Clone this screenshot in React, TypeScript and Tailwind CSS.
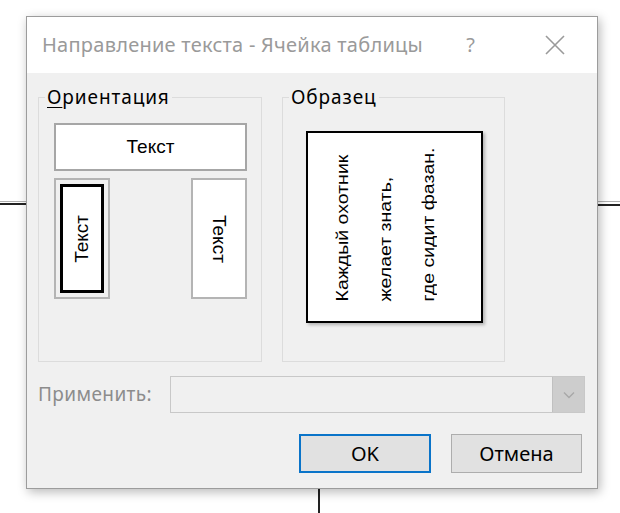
import React from "react";

const ui = { fontFamily: '"Noto Sans", "Open Sans", sans-serif' };
const arial = { fontFamily: '"Liberation Sans", Arial, sans-serif' };

function CloseIcon() {
  return (
    <svg width="20" height="20" viewBox="0 0 20 20" className="block">
      <path d="M1 1 L19 19 M19 1 L1 19" stroke="#9a9a9a" strokeWidth="1.6" fill="none" />
    </svg>
  );
}

function Chevron() {
  return (
    <svg width="12" height="8" viewBox="0 0 12 8" className="block">
      <path d="M1 1.5 L6 6.5 L11 1.5" stroke="#a8a8a8" strokeWidth="1.4" fill="none" />
    </svg>
  );
}

function Group({ label, underline, children, width }: { label: string; underline?: boolean; children: React.ReactNode; width: string }) {
  return (
    <div className={`border border-[#dcdcdc] h-[265px] ${width}`}>
      <div className="-mt-[13px] ml-[6px] w-fit px-[2px] bg-[#f0f0f0] text-[19px] leading-[24px] tracking-[0.9px] text-black">
        {underline ? (
          <>
            <span className="underline underline-offset-[3px] decoration-1">{label[0]}</span>
            {label.slice(1)}
          </>
        ) : (
          label
        )}
      </div>
      {children}
    </div>
  );
}

export default function App() {
  return (
    <div className="relative w-[620px] h-[513px] bg-white overflow-hidden" style={ui}>
      {/* document lines behind the dialog */}
      <div className="absolute left-0 top-[201px] w-[30px] h-px bg-[#b0b0b0]" />
      <div className="absolute left-0 top-[203px] w-[30px] h-[2px] bg-[#222]" />
      <div className="absolute left-[595px] top-[201px] w-[25px] h-px bg-[#b0b0b0]" />
      <div className="absolute left-[595px] top-[204px] w-[25px] h-[2px] bg-[#222]" />
      <div className="absolute left-[318px] top-[480px] w-[2px] h-[40px] bg-[#222]" />

      <div className="relative ml-[26px] mt-[16px] w-[572px] h-[473px] border border-[#9c9c9c] bg-[#f0f0f0] shadow-[2px_3px_10px_rgba(0,0,0,0.28)] flex flex-col">
        {/* title bar */}
        <div className="h-[56px] bg-white flex items-center shrink-0">
          <div className="pl-[15px] text-[20px] text-[#9a9a9a] tracking-[0.25px]">Направление текста - Ячейка таблицы</div>
          <div className="ml-auto text-[20px] text-[#9a9a9a] mr-[70px]">?</div>
          <div className="mr-[32px]">
            <CloseIcon />
          </div>
        </div>

        {/* groups */}
        <div className="flex gap-[20px] mt-[24px] ml-[11px]">
          <Group label="Ориентация" underline width="w-[224px]">
            <div className="pl-[15px] pt-[14px]">
              <div className="w-[193px] h-[48px] bg-white border-2 border-[#a6a6a6] flex items-center justify-center text-[19px] text-black" style={arial}>
                Текст
              </div>
              <div className="flex justify-between w-[193px] mt-[7px]">
                <div className="w-[56px] h-[121px] border-2 border-[#b4b4b4] p-[4px]">
                  <div className="w-full h-full border-[3px] border-black bg-white flex items-center justify-center">
                    <span className="[writing-mode:vertical-rl] rotate-180 text-[19px] text-black" style={arial}>
                      Текст
                    </span>
                  </div>
                </div>
                <div className="w-[56px] h-[121px] border-2 border-[#b4b4b4] bg-white flex items-center justify-center">
                  <span className="[writing-mode:vertical-rl] text-[19px] text-black" style={arial}>
                    Текст
                  </span>
                </div>
              </div>
            </div>
          </Group>
          <Group label="Образец" width="w-[223px]">
            <div className="pl-[23px] pt-[22px]">
              <div className="w-[177px] h-[192px] bg-white border-2 border-black shadow-[2px_2px_3px_rgba(0,0,0,0.25)] overflow-hidden">
                <div className="w-full h-full origin-bottom scale-y-[1.22]">
                  <div
                    className="w-full h-full [writing-mode:vertical-rl] rotate-180 pt-[16px] pr-[13px] text-[16px] leading-[43px] text-black whitespace-nowrap"
                    style={arial}
                  >
                    Каждый охотник
                    <br />
                    желает знать,
                    <br />
                    где сидит фазан.
                  </div>
                </div>
              </div>
            </div>
          </Group>
        </div>

        {/* apply row */}
        <div className="flex items-center mt-[14px] ml-[11px] mr-[12px]">
          <div className="w-[132px] text-[19px] tracking-[0.4px] text-[#8c8c8c]">Применить:</div>
          <div className="flex-1 h-[37px] border border-[#c8c8c8] bg-[#f0f0f0] flex justify-end">
            <div className="w-[32px] h-full bg-[#cdcdcd] border-l border-[#c0c0c0] flex items-center justify-center">
              <Chevron />
            </div>
          </div>
        </div>

        {/* buttons */}
        <div className="flex justify-end gap-[20px] mt-[21px] mr-[15px]">
          <button className="w-[132px] h-[39px] bg-[#e1e1e1] border-2 border-[#0a74c9] text-[20px] text-black">OK</button>
          <button className="w-[131px] h-[39px] bg-[#e1e1e1] border border-[#adadad] text-[20px] text-black">Отмена</button>
        </div>
      </div>
    </div>
  );
}
